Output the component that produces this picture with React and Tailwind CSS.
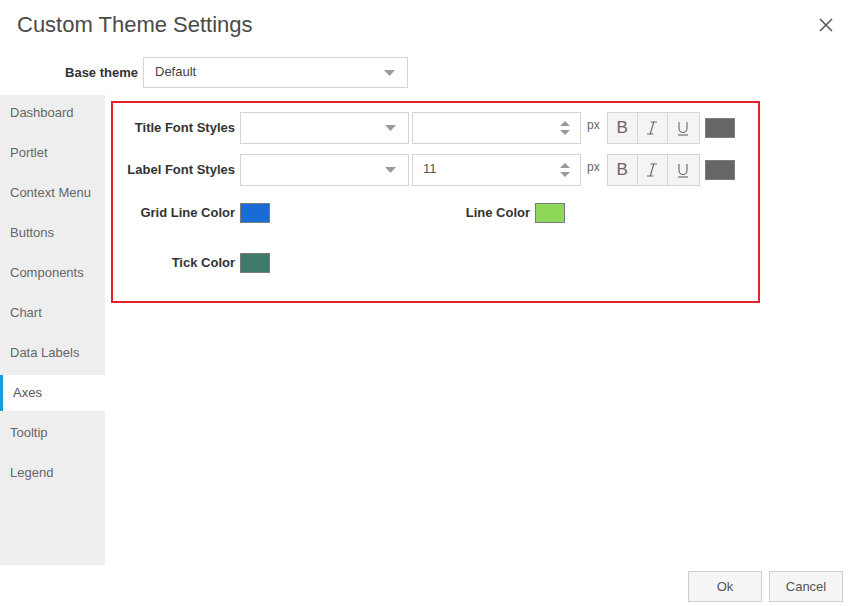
import React from "react";

const Caret = () => (
  <svg width="11" height="6" viewBox="0 0 11 6" className="shrink-0">
    <path d="M0 0 H11 L5.5 6 Z" fill="#9a9a9a" />
  </svg>
);

const Spinner = () => (
  <svg width="10" height="14" viewBox="0 0 10 14" className="shrink-0">
    <path d="M0 5 L5 0 L10 5 Z" fill="#9a9a9a" />
    <path d="M0 9 L5 14 L10 9 Z" fill="#9a9a9a" />
  </svg>
);

const Select = ({ w, h, value }) => (
  <div
    className={`flex items-center justify-between border border-[#d4d4d4] bg-white pl-[11px] pr-[12px] text-[13px] text-[#444] ${w} ${h}`}
  >
    <span className="-mt-[2px]">{value}</span>
    <Caret />
  </div>
);

const NumberInput = ({ value }) => (
  <div className="flex h-[32px] w-[169px] items-center justify-between border border-[#d4d4d4] bg-white pl-[10px] pr-[10px] text-[13px] text-[#555]">
    <span className="-mt-[2px]">{value}</span>
    <Spinner />
  </div>
);

const ItalicIcon = () => (
  <svg width="12" height="14" viewBox="0 0 12 14">
    <path d="M4.5 1 H11 M1 13 H7.5 M7.8 1 L4.2 13" stroke="#666" strokeWidth="1.1" fill="none" />
  </svg>
);

const StyleGroup = () => (
  <div className="flex h-[32px] border border-[#d4d4d4] bg-[#f4f4f4]">
    <div className="flex w-[30px] items-center justify-center border-r border-[#d4d4d4] text-[17px] font-light text-[#666]">
      B
    </div>
    <div className="flex w-[30px] items-center justify-center border-r border-[#d4d4d4]">
      <ItalicIcon />
    </div>
    <div className="flex w-[31px] items-center justify-center">
      <svg width="12" height="15" viewBox="0 0 12 15">
        <path d="M2 1 V7.5 A4 4 0 0 0 10 7.5 V1" stroke="#666" strokeWidth="1.1" fill="none" />
        <path d="M1 14 H11" stroke="#666" strokeWidth="1.1" />
      </svg>
    </div>
  </div>
);

const Swatch = ({ color }) => (
  <div className={`h-[20px] w-[30px] border border-[#7b7b7b] ${color}`} />
);

const FontRow = ({ label, value }) => (
  <div className="flex h-[32px] items-center">
    <div className="w-[122px] text-right text-[13px] font-bold text-[#333]">{label}</div>
    <div className="ml-[5px] flex items-center">
      <Select w="w-[169px]" h="h-[32px]" value="" />
      <div className="ml-[3px]">
        <NumberInput value={value} />
      </div>
      <span className="ml-[6px] mr-[7px] -mt-[6px] text-[12px] text-[#666]">px</span>
      <StyleGroup />
      <div className="ml-[5px]">
        <Swatch color="bg-[#666666]" />
      </div>
    </div>
  </div>
);

const ColorCell = ({ label, color }) => (
  <div className="flex w-[295px] items-center">
    <div className="w-[122px] text-right text-[13px] font-bold text-[#333]">{label}</div>
    <div className="ml-[5px]">
      <Swatch color={color} />
    </div>
  </div>
);

const navItems = [
  "Dashboard",
  "Portlet",
  "Context Menu",
  "Buttons",
  "Components",
  "Chart",
  "Data Labels",
  "Axes",
  "Tooltip",
  "Legend",
];

export default function App() {
  return (
    <div
      className="flex h-[606px] w-[848px] flex-col bg-white"
      style={{ fontFamily: '"Liberation Sans", Arial, sans-serif' }}
    >
      {/* Header */}
      <div className="flex h-[57px] items-start justify-between pl-[17px] pr-[15px] pt-[11px]">
        <h1 className="text-[22px] font-normal leading-[28px] text-[#4a4a4a]">Custom Theme Settings</h1>
        <svg width="14" height="14" viewBox="0 0 14 14" className="mt-[7px]">
          <path d="M1 1 L13 13 M13 1 L1 13" stroke="#555" strokeWidth="1.5" />
        </svg>
      </div>

      {/* Base theme */}
      <div className="flex h-[31px] items-center">
        <div className="w-[138px] text-right text-[13px] font-bold text-[#333]">Base theme</div>
        <div className="ml-[5px]">
          <Select w="w-[265px]" h="h-[31px]" value="Default" />
        </div>
      </div>

      {/* Body */}
      <div className="mt-[7px] flex h-[470px]">
        <nav className="flex w-[105px] flex-col gap-[4px] bg-[#eeeeee]">
          {navItems.map((item) =>
            item === "Axes" ? (
              <div
                key={item}
                className="flex h-[36px] items-center border-l-[3px] border-[#1a9be0] bg-white pl-[10px] text-[13px] text-[#555]"
              >
                {item}
              </div>
            ) : (
              <div key={item} className="flex h-[36px] items-center pl-[10px] text-[13px] text-[#666]">
                {item}
              </div>
            )
          )}
        </nav>

        <div className="pl-[6px] pt-[6px]">
          <div className="h-[202px] w-[649px] border-2 border-[#e3232b] pt-[9px]">
            <div className="flex flex-col gap-[10px]">
              <FontRow label="Title Font Styles" value="" />
              <FontRow label="Label Font Styles" value="11" />
            </div>
            <div className="mt-[17px] flex h-[20px] items-center">
              <ColorCell label="Grid Line Color" color="bg-[#1a6bd6]" />
              <ColorCell label="Line Color" color="bg-[#8fd85a]" />
            </div>
            <div className="mt-[30px] flex h-[20px] items-center">
              <ColorCell label="Tick Color" color="bg-[#417a6b]" />
            </div>
          </div>
        </div>
      </div>

      {/* Footer */}
      <div className="flex justify-end gap-[7px] pr-[5px] pt-[6px]">
        <button className="h-[31px] w-[74px] border border-[#cfcfcf] bg-[#f5f5f5] text-[13px] text-[#555]">
          Ok
        </button>
        <button className="h-[31px] w-[74px] border border-[#cfcfcf] bg-[#f5f5f5] text-[13px] text-[#555]">
          Cancel
        </button>
      </div>
    </div>
  );
}
